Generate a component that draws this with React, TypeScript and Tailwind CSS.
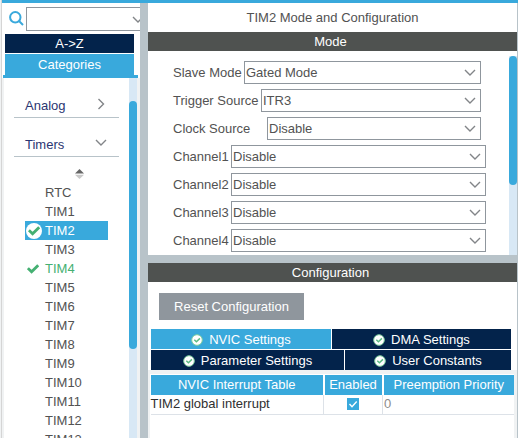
import { useState } from "react";

const timers = ["RTC", "TIM1", "TIM2", "TIM3", "TIM4", "TIM5", "TIM6", "TIM7", "TIM8", "TIM9", "TIM10", "TIM11", "TIM12", "TIM13"];

const modeFields = [
  { id: "slave", label: "Slave Mode", value: "Gated Mode", labelClass: "w-[71px]", rowClass: "mr-[28px]" },
  { id: "trigger", label: "Trigger Source", value: "ITR3", labelClass: "w-[88px]", rowClass: "mr-[28px]" },
  { id: "clock", label: "Clock Source", value: "Disable", labelClass: "w-[94px]", rowClass: "mr-[28px]" },
  { id: "ch1", label: "Channel1", value: "Disable", labelClass: "w-[58px]", rowClass: "mr-[23px]" },
  { id: "ch2", label: "Channel2", value: "Disable", labelClass: "w-[58px]", rowClass: "mr-[23px]" },
  { id: "ch3", label: "Channel3", value: "Disable", labelClass: "w-[58px]", rowClass: "mr-[23px]" },
  { id: "ch4", label: "Channel4", value: "Disable", labelClass: "w-[58px]", rowClass: "mr-[23px]" },
];

const tabRows = [
  { cols: "grid-cols-[180fr_179fr]", tabs: ["NVIC Settings", "DMA Settings"] },
  { cols: "grid-cols-[193fr_166fr]", tabs: ["Parameter Settings", "User Constants"] },
];

function ChevronDown({ className = "" }: { className?: string }) {
  return (
    <svg className={className} width="12" height="8" viewBox="0 0 12 8" fill="none" stroke="#828588" strokeWidth="1.4" aria-hidden="true">
      <path d="M1 1 6 6 11 1" />
    </svg>
  );
}

function Tick({ className = "" }: { className?: string }) {
  return (
    <svg className={className} width="12" height="10" viewBox="0 0 12 10" fill="none" stroke="#45b072" strokeWidth="2.8" aria-hidden="true">
      <path d="M.9 4.2 4.6 7.8 11.2 1.2" />
    </svg>
  );
}

function StatusBadge() {
  return (
    <svg width="12" height="12" viewBox="0 0 12 12" fill="none" aria-hidden="true">
      <circle cx="6" cy="6" r="5.3" fill="#fff" stroke="#7fcf9f" strokeWidth="1" />
      <path d="M3.3 5.8 5.4 7.8 8.9 4.4" stroke="#5cbb84" strokeWidth="1.5" />
    </svg>
  );
}

function Sidebar() {
  const [selected, setSelected] = useState("TIM2");
  return (
    <aside className="flex w-[138px] shrink-0 flex-col overflow-hidden bg-white">
      <div className="flex h-[31px] items-center pl-[7px]">
        <svg className="shrink-0" width="15" height="15" viewBox="0 0 15 15" fill="none" stroke="#39a9dc" strokeWidth="2" aria-hidden="true">
          <circle cx="6.3" cy="6.3" r="5.2" />
          <path d="m10 10 4 4" />
        </svg>
        <div className="relative ml-0.5 h-6 flex-1">
          <input aria-label="Search" className="h-6 w-full border border-r-0 border-[#8f969d] bg-white px-1 outline-none" />
          <ChevronDown className="absolute top-[9px] -right-1" />
        </div>
      </div>
      <div role="tablist" className="mr-1.5 ml-[3px] flex flex-col gap-px text-white">
        <button role="tab" aria-selected="false" className="h-[19px] bg-[#03234b]">A-&gt;Z</button>
        <button role="tab" aria-selected="true" className="h-[21px] bg-[#39a9dc]">Categories</button>
      </div>
      <div className="mr-0.5 ml-px h-[3px] bg-[#39a9dc]" />
      <div className="flex min-h-0 flex-1 border-r-[3px] border-l-2 border-[#f0f2f3]">
        <div className="flex-1 overflow-hidden">
          <button className="mx-2.5 flex h-10 w-[105px] items-end border-b border-[#b8c3c9] pb-[3px] pl-[11px] text-[#2b3672]">
            <span className="flex-1 text-left">Analog</span>
            <svg className="mr-3.5 mb-1" width="8" height="12" viewBox="0 0 8 12" fill="none" stroke="#828588" strokeWidth="1.4" aria-hidden="true">
              <path d="M1.5 1 6.5 6 1.5 11" />
            </svg>
          </button>
          <button className="mx-2.5 flex h-[39px] w-[105px] items-end border-b border-[#b8c3c9] pb-[3px] pl-[11px] text-[#2b3672]">
            <span className="flex-1 text-left">Timers</span>
            <ChevronDown className="mr-3 mb-1.5" />
          </button>
          <svg className="mt-3 mb-1 ml-[71px]" width="9" height="10" viewBox="0 0 9 10" aria-hidden="true">
            <path d="M0 4.5 4.5 0 9 4.5z" fill="#666" />
            <path d="M0 5.7 4.5 10 9 5.7z" fill="#c9c9c9" />
          </svg>
          <ul>
            {timers.map((name) => {
              const active = name === selected;
              return (
                <li key={name}>
                  <button
                    onClick={() => setSelected(name)}
                    className={`ml-[21px] flex h-[19px] w-[83px] items-center text-left ${active ? "bg-[#39a9dc] text-white" : name === "TIM4" ? "text-[#45b072]" : "text-[#525252]"}`}
                  >
                    <span className="flex w-5 shrink-0 items-center pl-px">
                      {name === "TIM2" && (
                        <span className="flex size-4 items-center justify-center rounded-full bg-white">
                          <Tick />
                        </span>
                      )}
                      {name === "TIM4" && <Tick className="ml-px" />}
                    </span>
                    {name}
                  </button>
                </li>
              );
            })}
          </ul>
        </div>
        <div className="w-2 shrink-0 bg-[#d8e8f5] pt-[23px]">
          <div className="h-[248px] rounded-full bg-[#39a9dc]" />
        </div>
      </div>
    </aside>
  );
}

function ModePanel() {
  return (
    <section>
      <h2 className="h-[19px] bg-[#4f5250] pr-1 text-center leading-[19px] text-white">Mode</h2>
      <div className="flex h-[204px]">
        <div className="flex flex-1 flex-col gap-[5px] pt-2.5 pl-[25px]">
          {modeFields.map((f) => (
            <div key={f.id} className={`flex h-[23px] items-center ${f.rowClass}`}>
              <label htmlFor={f.id} className={`shrink-0 whitespace-nowrap ${f.labelClass}`}>{f.label}</label>
              <div className="relative flex-1">
                <select id={f.id} defaultValue={f.value} className="block h-[23px] w-full appearance-none border border-[#8f969d] bg-white pl-px outline-none">
                  <option>{f.value}</option>
                </select>
                <ChevronDown className="pointer-events-none absolute top-2 right-[5px]" />
              </div>
            </div>
          ))}
        </div>
        <div className="mt-[5px] w-2 bg-[#d8e8f5]">
          <div className="h-[129px] rounded-full bg-[#39a9dc]" />
        </div>
      </div>
    </section>
  );
}

function ConfigurationPanel() {
  const [tab, setTab] = useState("NVIC Settings");
  const [enabled, setEnabled] = useState(true);
  return (
    <section className="flex flex-1 flex-col">
      <h2 className="h-[19px] bg-[#4f5250] pr-1 text-center leading-[19px] text-white">Configuration</h2>
      <div className="h-[47px] pt-[11px] pl-[11px]">
        <button className="h-[27px] w-[145px] bg-[#8f969d] text-white">Reset Configuration</button>
      </div>
      <div role="tablist" className="mr-1.5 ml-[3px] flex flex-col gap-px">
        {tabRows.map((row) => (
          <div key={row.tabs[0]} className={`grid h-5 gap-px ${row.cols}`}>
            {row.tabs.map((name) => (
              <button
                key={name}
                role="tab"
                aria-selected={tab === name}
                onClick={() => setTab(name)}
                className={`flex items-center justify-center gap-1.5 pt-px text-white ${tab === name ? "bg-[#39a9dc]" : "bg-[#03234b]"}`}
              >
                <StatusBadge />
                {name}
              </button>
            ))}
          </div>
        ))}
      </div>
      <div className="flex-1 border-t-4 border-r-[3px] border-l-2 border-[#f0f2f3] bg-white">
        <table className="w-full table-fixed border-collapse">
          <colgroup>
            <col className="w-[173px]" />
            <col className="w-[59px]" />
            <col />
          </colgroup>
          <thead>
            <tr className="h-5 text-white">
              <th className="border-t border-r-2 border-l border-white bg-[#39a9dc] p-0 pt-px font-normal">NVIC Interrupt Table</th>
              <th className="border-t border-r-2 border-white bg-[#39a9dc] p-0 pt-px font-normal">Enabled</th>
              <th className="border-t border-white bg-[#39a9dc] p-0 pt-px font-normal">Preemption Priority</th>
            </tr>
          </thead>
          <tbody>
            <tr className="h-5 border-b border-[#dde2e8]">
              <td className="border-r border-[#dde2e8] p-0 text-[#2f2f2f]">TIM2 global interrupt</td>
              <td className="border-r border-[#dde2e8] p-0">
                <label className="relative mx-auto block size-3">
                  <input
                    type="checkbox"
                    aria-label="TIM2 global interrupt enabled"
                    checked={enabled}
                    onChange={(e) => setEnabled(e.target.checked)}
                    className="block size-3 appearance-none border border-[#39a9dc] checked:bg-[#39a9dc]"
                  />
                  <svg className="pointer-events-none absolute inset-0" width="12" height="12" viewBox="0 0 12 12" fill="none" stroke="#fff" strokeWidth="1.4" aria-hidden="true">
                    <path d="M2.5 6 5 8.7 9.7 3.5" />
                  </svg>
                </label>
              </td>
              <td className="p-0 pl-px text-[#8c8c8c]">0</td>
            </tr>
          </tbody>
        </table>
      </div>
    </section>
  );
}

export default function App() {
  return (
    <div className="flex h-screen overflow-hidden border-l border-[#f0f2f3] bg-white font-['Liberation_Sans',Arial,sans-serif] text-[13px] leading-4 text-[#525252]">
      <div className="flex min-w-0 flex-1 flex-col border-l border-[#d5d5d5]">
        <div className="h-[3px] shrink-0 bg-[#39a9dc]" />
        <div className="flex min-h-0 flex-1">
          <Sidebar />
          <div className="w-2 shrink-0 bg-[#b8c3c9]" />
          <main className="flex min-w-0 flex-1 flex-col border-r border-[#b8c3c9]">
            <h1 className="h-[29px] text-center leading-[29px]">TIM2 Mode and Configuration</h1>
            <ModePanel />
            <div className="h-2 shrink-0 bg-[#b8c3c9]" />
            <ConfigurationPanel />
          </main>
        </div>
      </div>
    </div>
  );
}
